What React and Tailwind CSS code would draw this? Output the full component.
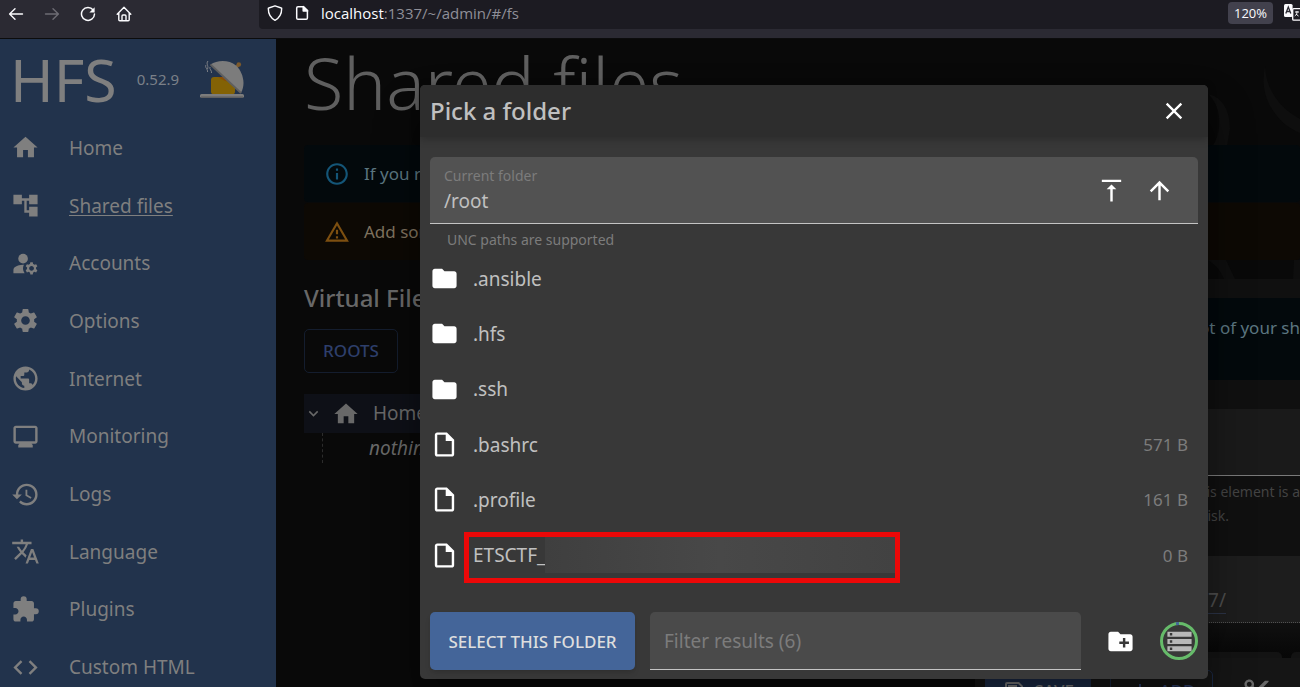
import React from "react";
import {
  MdHome, MdAccountTree, MdManageAccounts, MdSettings, MdPublic, MdMonitor, MdHistory,
  MdTranslate, MdExtension, MdCode, MdFolder, MdOutlineInsertDriveFile, MdCreateNewFolder,
  MdStorage, MdVerticalAlignTop, MdArrowUpward, MdClose, MdInfoOutline, MdOutlineReportProblem,
  MdExpandMore, MdOutlineSave, MdAdd, MdContentCut,
} from "react-icons/md";

const NAV = [
  { label: "Home", Icon: MdHome },
  { label: "Shared files", Icon: MdAccountTree, active: true },
  { label: "Accounts", Icon: MdManageAccounts },
  { label: "Options", Icon: MdSettings },
  { label: "Internet", Icon: MdPublic },
  { label: "Monitoring", Icon: MdMonitor },
  { label: "Logs", Icon: MdHistory },
  { label: "Language", Icon: MdTranslate },
  { label: "Plugins", Icon: MdExtension },
  { label: "Custom HTML", Icon: MdCode },
];

const FILES = [
  { name: ".ansible", folder: true },
  { name: ".hfs", folder: true },
  { name: ".ssh", folder: true },
  { name: ".bashrc", size: "571 B" },
  { name: ".profile", size: "161 B" },
  { name: "ETSCTF_", size: "0 B", marked: true },
];

function BrowserBar() {
  return (
    <header className="flex h-[39px] shrink-0 items-start border-b border-[#0c0c0d] bg-[#2b2a33] font-['Open_Sans',sans-serif] text-[#fbfbfe]">
      <div className="flex h-7 w-[259px] shrink-0 items-center gap-5 pl-2">
        <button aria-label="Back" className="size-4">
          <svg viewBox="0 0 16 16" className="size-4" fill="none" stroke="currentColor" strokeWidth="1.4" strokeLinecap="round" strokeLinejoin="round">
            <path d="M14.5 8H1.7M7 2.7 1.6 8 7 13.3" />
          </svg>
        </button>
        <button aria-label="Forward" className="size-4 text-[#6d6c74]">
          <svg viewBox="0 0 16 16" className="size-4" fill="none" stroke="currentColor" strokeWidth="1.4" strokeLinecap="round" strokeLinejoin="round">
            <path d="M1.5 8h12.8M9 2.7 14.4 8 9 13.3" />
          </svg>
        </button>
        <button aria-label="Reload" className="size-4">
          <svg viewBox="0 0 16 16" className="size-4" fill="none" stroke="currentColor" strokeWidth="1.5" strokeLinecap="round">
            <path d="M13.2 4A6.5 6.5 0 1 0 14.5 8" />
            <path d="M14.6 1.2v5.2H9.4z" fill="currentColor" stroke="none" />
          </svg>
        </button>
        <button aria-label="Home page" className="size-4">
          <svg viewBox="0 0 16 16" className="size-4" fill="none" stroke="currentColor" strokeWidth="1.4" strokeLinecap="round" strokeLinejoin="round">
            <path d="M1.2 8.2 8 1.3l6.8 6.9M2.8 7v6.7c0 .6.4 1 1 1h8.4c.6 0 1-.4 1-1V7M6 14.5V10c0-.6.4-1 1-1h2c.6 0 1 .4 1 1v4.5" />
          </svg>
        </button>
      </div>
      <div className="flex h-[29px] min-w-0 flex-1 items-center gap-[11px] rounded-bl bg-[#1c1b22] pb-[3px] pl-2">
        <svg viewBox="0 0 16 16" className="size-4 shrink-0" fill="none" stroke="currentColor" strokeWidth="1.4" strokeLinejoin="round">
          <path d="M8 .8 14.3 3c.3 0 .4.3.4.6C14.7 9.5 12.5 13 8 15.3 3.5 13 1.3 9.5 1.3 3.6c0-.3.1-.6.4-.6z" />
        </svg>
        <svg viewBox="0 0 16 16" className="size-4 shrink-0" fill="none" stroke="currentColor" strokeWidth="1.5" strokeLinejoin="round">
          <path d="M9.5 1.7H4c-.9 0-1.3.5-1.3 1.3v10c0 .9.4 1.3 1.3 1.3h8.2c.8 0 1.2-.4 1.2-1.3V5.5z" />
          <path d="M9.2 1.5v4.4h4.4z" fill="currentColor" />
        </svg>
        <span className="flex-1 truncate text-[15px] leading-5 text-[#8f8f98]">
          <span className="text-[#fbfbfe]">localhost</span>:1337/~/admin/#/fs
        </span>
        <button className="h-[22px] w-[45px] rounded bg-[#42414d] text-[13px] leading-5">120%</button>
        <div className="w-4 shrink-0 overflow-hidden">
          <svg viewBox="0 0 20 18" className="h-[18px] w-5" fill="none">
            <rect x="8.7" y="4.7" width="12" height="11.5" rx="1" stroke="#fbfbfe" strokeWidth="1.3" />
            <rect x="0" y="0" width="8.6" height="13" rx="1.5" fill="#fbfbfe" />
            <path d="M1.8 9.5 4.3 3l2.5 6.5M2.7 7.5h3.2" stroke="#2b2a33" strokeWidth="1.3" />
            <path d="M11 8h4M13 7v1c0 2-1 3-2.2 4M12 10l2.5 2" stroke="#fbfbfe" strokeWidth="1" />
          </svg>
        </div>
      </div>
    </header>
  );
}

function Logo() {
  return (
    <svg viewBox="0 0 44 38" className="h-[38px] w-11" aria-hidden="true">
      <path d="m36.5 7 2.5-2.5" stroke="#7d5a2c" strokeWidth="3" />
      <circle cx="38.8" cy="4.5" r="2.3" fill="#7d5a2c" />
      <rect x="11" y="17" width="24" height="17.5" rx="3" fill="#836205" />
      <path d="M18 17h9l5 5-7-1z" fill="#8a4d05" />
      <path d="M10.5 4.5C17 0 29-.5 36 5.5 43 12 46 24 41 33z" fill="#7c7c7c" />
      <path d="M10.5 4.5 41 33" stroke="#5f5f5f" strokeWidth="1.8" />
      <path d="M8 1c-2.500 3 1 4.500-.5 8M6 5c-1.500 2.500 2 4 1.500 7M10 7c-1 2 2 3.500 1.500 6" stroke="#7c7f85" strokeWidth="1" fill="none" />
      <rect x="0" y="34" width="44" height="3.8" rx="1.5" fill="#7c7c7c" />
      <path d="M1 37.2h42" stroke="#5c5c5c" strokeWidth="1.2" />
    </svg>
  );
}

function Sidebar() {
  return (
    <aside className="w-[276px] shrink-0 bg-[#22334c] text-[#7f7f7f]">
      <div className="flex h-20 items-center pl-[10px]">
        <h1 className="text-[59px] leading-none">HFS</h1>
        <span className="ml-5 text-[15px] text-[#7b8088]">0.52.9</span>
        <span className="ml-[21px]"><Logo /></span>
      </div>
      <nav className="grid h-[577px] grid-rows-10">
        {NAV.map(({ label, Icon, active }) => (
          <a key={label} href="#" className="flex items-center pl-[11px]">
            <Icon className="size-[29px] shrink-0" />
            <span className={`ml-[29px] text-[19px] leading-7 ${active ? "underline underline-offset-2" : ""}`}>{label}</span>
          </a>
        ))}
      </nav>
    </aside>
  );
}

function Swirls() {
  return (
    <svg viewBox="0 0 100 260" className="absolute top-[11px] right-0 h-[260px] w-[100px]" fill="#0e0e0e" aria-hidden="true">
      <path d="M65 16c-4 18 0 36 12 50 6 8 14 13 23 17V69C82 59 66 42 65 16z" />
      <path d="M8 44c14 3 22 16 22 35l-3 17H13c10-18 8-40-5-52z" />
      <path d="M8 210h18l9 19H24c-4-10-10-15-16-19zM94 210h6v19h-7z" />
    </svg>
  );
}

function MainPage() {
  return (
    <main className="relative min-w-0 flex-1 overflow-hidden bg-[#090909] pl-7 text-[#686868]">
      <Swirls />
      <h2 className="flex h-[106px] items-center text-[72px] leading-none font-light whitespace-nowrap text-[#5f5f5f]">
        <span className="-mt-5">Shared files</span>
      </h2>
      <div className="relative flex h-[57px] items-center gap-[14px] rounded bg-[#03090c] pl-5 text-[17px] text-[#5b7680]">
        <MdInfoOutline className="size-[26px] shrink-0 text-[#145577]" />
        <p>If you run</p>
      </div>
      <div className="relative mt-px flex h-[57px] items-center gap-[14px] rounded bg-[#0d0904] pl-5 text-[17px] text-[#7f725f]">
        <MdOutlineReportProblem className="size-[26px] shrink-0 text-[#7d4f10]" />
        <p>Add some</p>
      </div>
      <div className="mt-[18px] flex">
        <section className="w-[671px] shrink-0">
          <h3 className="text-2xl leading-10 font-medium">Virtual File</h3>
          <button className="mt-[11px] h-11 w-[94px] rounded-[5px] border border-[#141d2e] text-[17px] font-medium text-[#2e3f6b]">ROOTS</button>
          <div className="mt-[21px] flex h-[39px] items-center bg-[#0e1017] text-[19px]">
            <MdExpandMore className="size-[19px]" />
            <MdHome className="ml-[9px] size-7" />
            <span className="ml-[13px]">Home</span>
          </div>
          <div className="ml-[18px] flex h-[30px] items-center border-l border-dashed border-[#2c2c2c] pl-[46px] text-[19px] italic">nothing</div>
        </section>
        <section className="relative mt-px min-w-0 flex-1 overflow-hidden bg-[#101010] pt-[19px]">
          <div className="h-[82px] bg-[#03090c] pt-4 text-right text-[17px] leading-7 whitespace-nowrap text-[#5b7680]">ot of your sh</div>
          <div className="mt-[29px] h-[67px] border-b border-[#7a7a7a] bg-[#1a1a1a]" />
          <div className="flex flex-col items-end pt-1 text-[14px] leading-6 text-[#434343]">
            <span className="whitespace-nowrap">is element is a</span>
            <span className="pr-[71px]">isk.</span>
          </div>
          <div className="mt-7 h-[67px] border-b border-dotted border-[#515151] bg-[#1d1d1d] pt-[30px] pr-[74px] text-right text-[19px] leading-7">
            <a href="#" className="border-b border-[#2b3346] text-[#4d4d4d]">7/</a>
          </div>
          <div className="flex justify-end gap-[9px] bg-linear-to-b from-[#101010] to-[#070707] pt-[29px]">
            <div className="h-[6px] w-[200px] rounded-t-[5px] bg-[#131313]" />
            <div className="h-[6px] w-[9px] rounded-tl-[5px] bg-[#131313]" />
          </div>
          <div className="flex h-16 items-start bg-[#151515] pt-3 pl-[10px] text-[17px] font-medium">
            <button className="flex h-[42px] w-[106px] shrink-0 items-center justify-center gap-2 rounded bg-[#1d2d49] text-[#7f7f7f]"><MdOutlineSave className="size-6" />SAVE</button>
            <button className="ml-[19px] flex h-[42px] w-[103px] shrink-0 items-center justify-center gap-2 rounded-[5px] border border-[#1b2842] text-[#2e3f6b]"><MdAdd className="size-6" />ADD</button>
            <button aria-label="Cut" className="flex h-[42px] flex-1 items-center justify-center"><MdContentCut className="size-[29px]" /></button>
          </div>
        </section>
      </div>
    </main>
  );
}

function PickFolderDialog() {
  return (
    <div className="absolute inset-0 flex items-start pt-[85px] pr-[92px] pl-[420px]">
      <div role="dialog" aria-labelledby="pick-title" className="flex-1 rounded-[5px] bg-[#383838] text-[#c0c0c0] shadow-[0_13px_18px_-8px_rgba(0,0,0,0.2),0_28px_45px_3px_rgba(0,0,0,0.3)]">
        <div className="flex h-[52px] items-center justify-between rounded-t-[5px] bg-[#2d2d2d] pr-5 pl-[10px] shadow-[0_2px_8px_rgba(0,0,0,0.25)]">
          <h2 id="pick-title" className="text-2xl font-medium">Pick a folder</h2>
          <button aria-label="Close" className="text-white"><MdClose className="size-7" /></button>
        </div>
        <div className="px-[10px] pt-5">
          <div className="flex h-[67px] items-center rounded-t-[5px] border-b border-[#c4c4c4] bg-[#525252] pr-6 pl-[14px]">
            <div className="min-w-0 flex-1">
              <label htmlFor="folder" className="block text-[14px] leading-[22px] text-[#7c7c7c]">Current folder</label>
              <input id="folder" defaultValue="/root" className="block h-7 w-full bg-transparent text-[19px] outline-none" />
            </div>
            <button aria-label="Go to root" className="text-white"><MdVerticalAlignTop className="size-[29px]" /></button>
            <button aria-label="Go up" className="ml-[19px] text-white"><MdArrowUpward className="size-[29px]" /></button>
          </div>
          <p className="mt-[5px] pl-[17px] text-[14px] leading-[22px] text-[#7c7c7c]">UNC paths are supported</p>
          <ul className="grid h-[332px] grid-rows-6">
            {FILES.map(({ name, folder, size, marked }) => (
              <li key={name} className="relative flex items-center pr-[10px]">
                {folder ? <MdFolder className="size-[29px] text-white" /> : <MdOutlineInsertDriveFile className="size-[29px] text-white" />}
                <span className="ml-[14px] text-[19px] leading-7">{name}</span>
                {marked && <span className="h-9 w-[350px] bg-linear-to-r from-[#3f3f3f] via-[#484848] to-[#424242]" />}
                <span className="ml-auto text-[17px] text-[#7c7c7c]">{size}</span>
                {marked && <span className="absolute top-1 left-[34px] h-[51px] w-[436px] border-[5px] border-[#ec0808]" />}
              </li>
            ))}
          </ul>
          <div className="flex items-center pt-[29px] pb-[9px]">
            <button className="h-[58px] w-[205px] rounded-[5px] bg-[#446599] pt-px text-[17px] font-medium text-[#dedede] shadow-md">SELECT THIS FOLDER</button>
            <input aria-label="Filter results" placeholder="Filter results (6)" className="ml-[15px] h-[58px] min-w-0 flex-1 rounded-t-[5px] border-b border-[#c4c4c4] bg-[#4a4a4a] px-[14px] pt-px text-[19px] outline-none placeholder:text-[#7c7c7c]" />
            <button aria-label="Create folder" className="ml-[25px] text-white"><MdCreateNewFolder className="size-[29px]" /></button>
            <button aria-label="Disk space" className="relative ml-[25px] flex size-[38px] items-center justify-center text-[#b8b8b8]">
              <svg viewBox="0 0 38 38" className="absolute inset-0 size-[38px]" fill="none" strokeWidth="3">
                <circle cx="19" cy="19" r="17.5" stroke="#66bb6a" />
                <path d="M16 1.8a17.5 17.5 0 0 1 3-.3" stroke="#446599" />
              </svg>
              <MdStorage className="size-[29px]" />
            </button>
          </div>
        </div>
      </div>
    </div>
  );
}

export default function App() {
  return (
    <div className="relative flex h-screen flex-col overflow-hidden bg-[#090909] font-['Noto_Sans',sans-serif]">
      <BrowserBar />
      <div className="flex min-h-0 flex-1">
        <Sidebar />
        <MainPage />
      </div>
      <PickFolderDialog />
    </div>
  );
}
